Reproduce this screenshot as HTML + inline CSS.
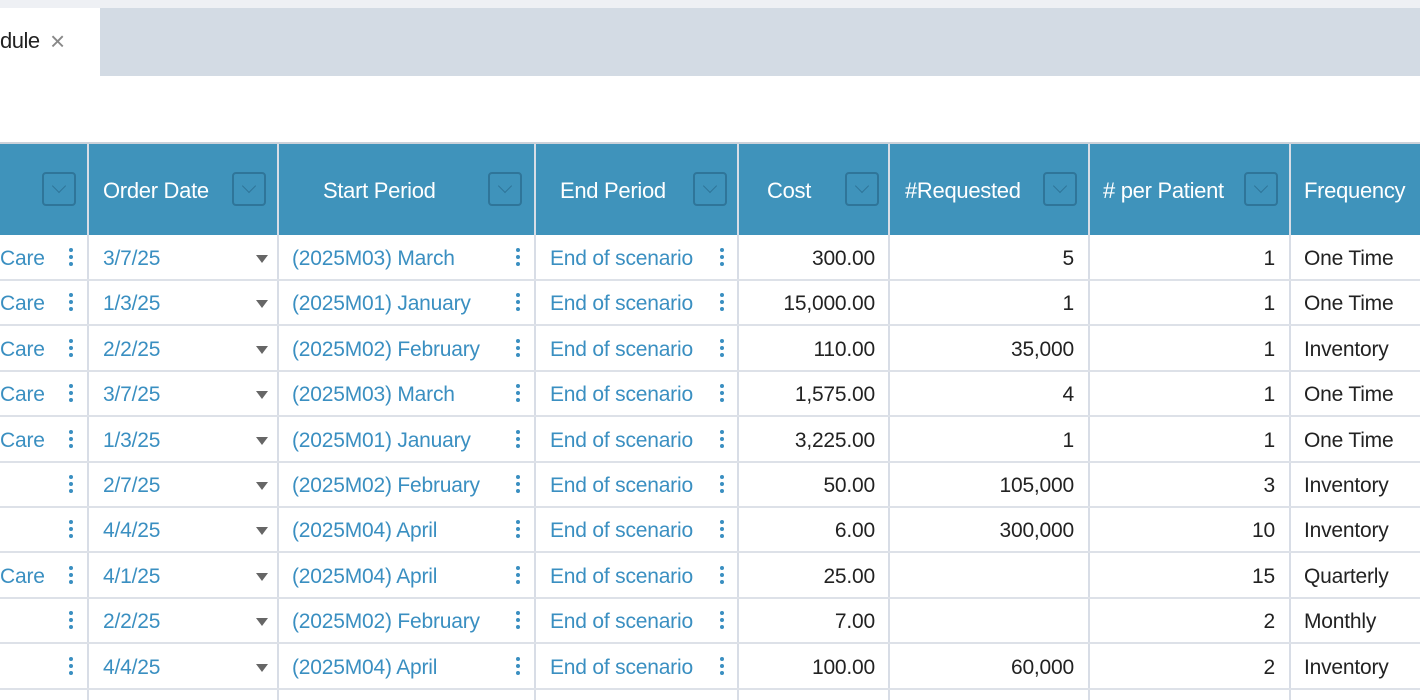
<!DOCTYPE html><html><head><style>
body{margin:0;width:1420px;height:700px;overflow:hidden;background:#fff;font-family:"Liberation Sans",sans-serif;position:relative}
.a{position:absolute}
.hd{top:144px;height:91px;background:#3f93bb;left:0;width:1420px}
.ht{color:#fff;font-size:22px;top:178px;letter-spacing:-0.3px}
.dd{width:34px;height:34px;border:2px solid #2f7599;border-radius:4px;top:172px;box-sizing:border-box}
.dd:after{content:"";position:absolute;left:10px;top:7px;width:9px;height:9px;border-right:1.5px solid #2f7599;border-bottom:1.5px solid #2f7599;transform:rotate(45deg)}
.vl{top:144px;height:556px;width:2px;background:#d8dde6}
.hl{left:0;width:1420px;height:2px;background:#dde1e8}
.c{font-size:21px;letter-spacing:-0.2px;line-height:24px}
.b{color:#3a8fc1}.k{color:#222}
.r{text-align:right}
.m{width:4px}
.m i{display:block;width:4px;height:4px;border-radius:2px;background:#3a8fc1;margin-bottom:3px}
.tri{width:0;height:0;border-left:6px solid transparent;border-right:6px solid transparent;border-top:8px solid #666}
</style></head><body>
<div class="a" style="left:0;top:0;width:1420px;height:8px;background:#eef0f4"></div>
<div class="a" style="left:100px;top:8px;width:1320px;height:68px;background:#d3dbe4"></div>
<div class="a" style="left:0;top:28px;font-size:22px;color:#222;letter-spacing:-0.5px">dule</div>
<div class="a" style="left:50px;top:26px;font-size:26px;color:#888">×</div>
<div class="a" style="left:0;top:142px;width:1420px;height:2px;background:#ccd2da"></div>
<div class="a hd"></div>
<div class="a ht" style="left:103px">Order Date</div>
<div class="a ht" style="left:323px">Start Period</div>
<div class="a ht" style="left:560px">End Period</div>
<div class="a ht" style="left:767px">Cost</div>
<div class="a ht" style="left:905px">#Requested</div>
<div class="a ht" style="left:1103px"># per Patient</div>
<div class="a ht" style="left:1304px">Frequency</div>
<div class="a dd" style="left:42px"></div><div class="a dd" style="left:232px"></div><div class="a dd" style="left:488px"></div><div class="a dd" style="left:693px"></div><div class="a dd" style="left:845px"></div><div class="a dd" style="left:1043px"></div><div class="a dd" style="left:1244px"></div>
<div class="a vl" style="left:87px"></div><div class="a vl" style="left:277px"></div><div class="a vl" style="left:534px"></div><div class="a vl" style="left:737px"></div><div class="a vl" style="left:888px"></div><div class="a vl" style="left:1088px"></div><div class="a vl" style="left:1289px"></div>
<div id="rows"></div>
<script>
var d=[["Care","3/7/25","(2025M03) March","300.00","5","1","One Time"],["Care","1/3/25","(2025M01) January","15,000.00","1","1","One Time"],["Care","2/2/25","(2025M02) February","110.00","35,000","1","Inventory"],["Care","3/7/25","(2025M03) March","1,575.00","4","1","One Time"],["Care","1/3/25","(2025M01) January","3,225.00","1","1","One Time"],["","2/7/25","(2025M02) February","50.00","105,000","3","Inventory"],["","4/4/25","(2025M04) April","6.00","300,000","10","Inventory"],["Care","4/1/25","(2025M04) April","25.00","","15","Quarterly"],["","2/2/25","(2025M02) February","7.00","","2","Monthly"],["","4/4/25","(2025M04) April","100.00","60,000","2","Inventory"]];
var h="",m='<i></i><i></i><i></i>';
for(var i=0;i<10;i++){var y=235+i*45.4,t=y+12,r=d[i];
h+='<div class="a hl" style="top:'+(y+44)+'px"></div>';
h+='<div class="a c b" style="left:0;top:'+t+'px">'+r[0]+'</div>';
h+='<div class="a m" style="left:69px;top:'+(y+13)+'px">'+m+'</div>';
h+='<div class="a c b" style="left:103px;top:'+t+'px">'+r[1]+'</div>';
h+='<div class="a tri" style="left:256px;top:'+(y+20)+'px"></div>';
h+='<div class="a c b" style="left:292px;top:'+t+'px">'+r[2]+'</div>';
h+='<div class="a m" style="left:516px;top:'+(y+13)+'px">'+m+'</div>';
h+='<div class="a c b" style="left:550px;top:'+t+'px">End of scenario</div>';
h+='<div class="a m" style="left:720px;top:'+(y+13)+'px">'+m+'</div>';
h+='<div class="a c k r" style="left:740px;width:135px;top:'+t+'px">'+r[3]+'</div>';
h+='<div class="a c k r" style="left:890px;width:184px;top:'+t+'px">'+r[4]+'</div>';
h+='<div class="a c k r" style="left:1090px;width:185px;top:'+t+'px">'+r[5]+'</div>';
h+='<div class="a c k" style="left:1304px;top:'+t+'px">'+r[6]+'</div>';}
document.getElementById("rows").innerHTML=h;
</script>
</body></html>
